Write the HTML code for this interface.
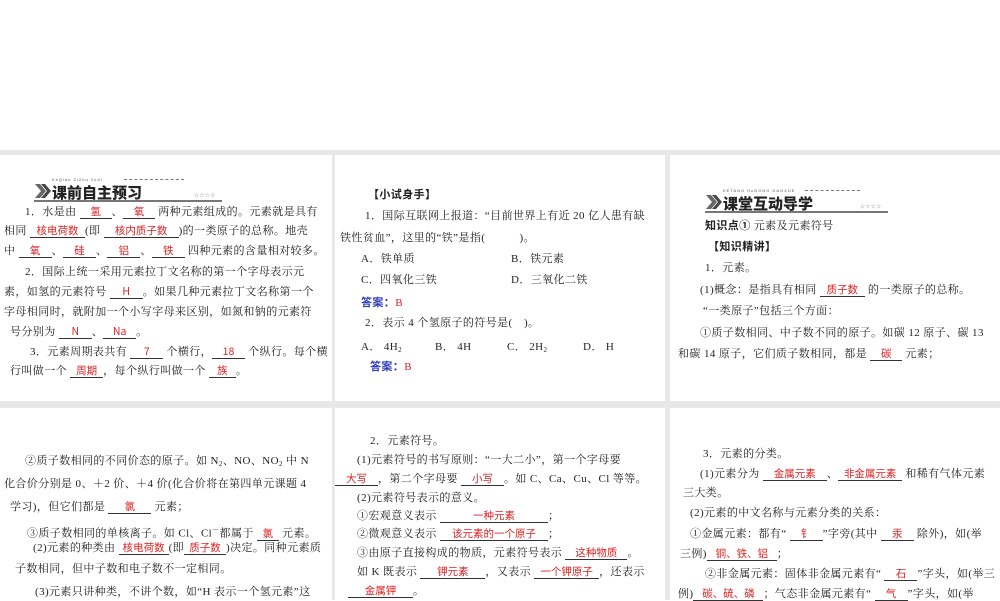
<!DOCTYPE html>
<html><head><meta charset="utf-8"><style>
*{margin:0;padding:0;box-sizing:border-box}
body{width:1000px;height:600px;background:#fff;position:relative;overflow:hidden;font-family:"Liberation Serif","Noto Serif CJK SC",serif;font-size:11px;color:#222;letter-spacing:0.4px}
.g{position:absolute;left:0;top:150px;width:1000px;height:450px;background:#e8e8e8}
.p{position:absolute;background:#fff}
.l{position:absolute;white-space:nowrap;line-height:14px;height:14px}
.b{display:inline-block;border-bottom:1px solid #333;color:#d22;text-align:center;line-height:12px;height:13px;vertical-align:baseline;font-family:"Noto Sans CJK SC","Liberation Sans",sans-serif;font-size:10.5px;letter-spacing:0}
.k{font-weight:bold;font-family:"Noto Sans CJK SC",sans-serif}
.bl{color:#2b3bbf;font-weight:bold;font-family:"Noto Sans CJK SC",sans-serif}
.r{color:#d22}
sub{font-size:7px;vertical-align:-2px}
sup{font-size:7px}
.hd{position:absolute;height:22px}
.hd .t{position:absolute;left:18px;top:2px;font-size:15px;font-weight:900;font-family:"Noto Sans CJK SC",sans-serif;color:#222;letter-spacing:0}
.hd .ln{position:absolute;left:0;bottom:0;height:2px;background:#777}
.hd .py{position:absolute;left:18px;top:-3px;font-size:4px;color:#555;letter-spacing:1px;font-family:"Liberation Sans",sans-serif}
.hd .st{position:absolute;bottom:3px;font-size:5px;color:#999}
.hd .dl{position:absolute;top:-1px;height:1px;border-top:1px dashed #777}
</style></head><body>
<div class="g"></div>
<div class="p" style="left:0;top:155px;width:332px;height:246px"></div>
<div class="p" style="left:335px;top:155px;width:330px;height:246px"></div>
<div class="p" style="left:670px;top:155px;width:330px;height:246px"></div>
<div class="p" style="left:0;top:408px;width:332px;height:192px"></div>
<div class="p" style="left:335px;top:408px;width:330px;height:192px"></div>
<div class="p" style="left:670px;top:408px;width:330px;height:192px"></div>

<div class="hd" style="left:34px;top:180px;width:188px">
<svg style="position:absolute;left:0;top:3px" width="18" height="16"><polygon points="1,1 6,1 12,8 6,15 1,15 7,8" fill="#666"/><polygon points="7,1 11,1 17,8 11,15 7,15 13,8" fill="#444"/></svg>
<div class="py">KeQian ZiZhu YuXi</div><div class="dl" style="left:90px;width:60px"></div>
<div class="t">课前自主预习</div><div class="st" style="left:160px">☆☆☆☆</div>
<div class="ln" style="width:188px"></div></div>

<div class="l" style="left:25px;top:205px">1．水是由 <span class="b" style="width:32px">氢</span>、<span class="b" style="width:32px">氧</span> 两种元素组成的。元素就是具有</div>
<div class="l" style="left:4px;top:224px">相同 <span class="b" style="width:55px">核电荷数</span>(即 <span class="b" style="width:75px">核内质子数</span>)的一类原子的总称。地壳</div>
<div class="l" style="left:4px;top:244px">中 <span class="b" style="width:33px">氧</span>、<span class="b" style="width:33px">硅</span>、<span class="b" style="width:33px">铝</span>、<span class="b" style="width:33px">铁</span> 四种元素的含量相对较多。</div>
<div class="l" style="left:25px;top:265px">2．国际上统一采用元素拉丁文名称的第一个字母表示元</div>
<div class="l" style="left:4px;top:285px">素，如氢的元素符号 <span class="b" style="width:33px">H</span>。如果几种元素拉丁文名称第一个</div>
<div class="l" style="left:4px;top:305px">字母相同时，就附加一个小写字母来区别，如氮和钠的元素符</div>
<div class="l" style="left:10px;top:325px">号分别为 <span class="b" style="width:33px">N</span>、<span class="b" style="width:33px">Na</span>。</div>
<div class="l" style="left:30px;top:345px">3．元素周期表共有 <span class="b" style="width:33px">7</span> 个横行，<span class="b" style="width:33px">18</span> 个纵行。每个横</div>
<div class="l" style="left:10px;top:364px">行叫做一个 <span class="b" style="width:33px">周期</span>，每个纵行叫做一个 <span class="b" style="width:27px">族</span>。</div>

<div class="l k" style="left:368px;top:187px">【小试身手】</div>
<div class="l" style="left:365px;top:209px">1．国际互联网上报道：“目前世界上有近 20 亿人患有缺</div>
<div class="l" style="left:340px;top:231px">铁性贫血”，这里的“铁”是指(　　　)。</div>
<div class="l" style="left:361px;top:252px">A．铁单质</div><div class="l" style="left:511px;top:252px">B．铁元素</div>
<div class="l" style="left:361px;top:273px">C．四氧化三铁</div><div class="l" style="left:511px;top:273px">D．三氧化二铁</div>
<div class="l" style="left:361px;top:295px"><span class="bl">答案：</span><span class="r">B</span></div>
<div class="l" style="left:365px;top:316px">2．表示 4 个氢原子的符号是(　)。</div>
<div class="l" style="left:361px;top:340px">A． 4H<sub>2</sub></div><div class="l" style="left:435px;top:340px">B． 4H</div><div class="l" style="left:507px;top:340px">C． 2H<sub>2</sub></div><div class="l" style="left:583px;top:340px">D． H</div>
<div class="l" style="left:370px;top:359px"><span class="bl">答案：</span><span class="r">B</span></div>

<div class="hd" style="left:705px;top:191px;width:183px">
<svg style="position:absolute;left:0;top:3px" width="18" height="16"><polygon points="1,1 6,1 12,8 6,15 1,15 7,8" fill="#666"/><polygon points="7,1 11,1 17,8 11,15 7,15 13,8" fill="#444"/></svg>
<div class="py">KETANG HuDONG DAOXUE</div><div class="dl" style="left:100px;width:55px"></div>
<div class="t">课堂互动导学</div><div class="st" style="left:155px">☆☆☆☆</div>
<div class="ln" style="width:183px"></div></div>
<div class="l" style="left:705px;top:218px"><span class="k">知识点①</span> 元素及元素符号</div>
<div class="l k" style="left:708px;top:239px">【知识精讲】</div>
<div class="l" style="left:705px;top:261px">1．元素。</div>
<div class="l" style="left:700px;top:283px">(1)概念：是指具有相同 <span class="b" style="width:45px">质子数</span> 的一类原子的总称。</div>
<div class="l" style="left:703px;top:304px">“一类原子”包括三个方面：</div>
<div class="l" style="left:700px;top:326px">①质子数相同、中子数不同的原子。如碳 12 原子、碳 13</div>
<div class="l" style="left:678px;top:347px">和碳 14 原子，它们质子数相同，都是 <span class="b" style="width:32px">碳</span> 元素；</div>

<div class="l" style="left:25px;top:454px">②质子数相同的不同价态的原子。如 N<sub>2</sub>、NO、NO<sub>2</sub> 中 N</div>
<div class="l" style="left:4px;top:477px">化合价分别是 0、＋2 价、＋4 价(化合价将在第四单元课题 4</div>
<div class="l" style="left:10px;top:500px">学习)，但它们都是 <span class="b" style="width:43px">氯</span> 元素；</div>
<div class="l" style="left:27px;top:523px">③质子数相同的单核离子。如 Cl、Cl<sup>－</sup>都属于 <span class="b" style="width:22px">氯</span> 元素。</div>
<div class="l" style="left:33px;top:541px">(2)元素的种类由 <span class="b" style="width:50px">核电荷数</span>(即<span class="b" style="width:42px">质子数</span>)决定。同种元素质</div>
<div class="l" style="left:15px;top:562px">子数相同，但中子数和电子数不一定相同。</div>
<div class="l" style="left:35px;top:585px">(3)元素只讲种类，不讲个数，如“H 表示一个氢元素”这</div>

<div class="l" style="left:370px;top:434px">2．元素符号。</div>
<div class="l" style="left:357px;top:453px">(1)元素符号的书写原则：“一大二小”，第一个字母要</div>
<div class="l" style="left:335px;top:472px"><span class="b" style="width:43px">大写</span>，第二个字母要 <span class="b" style="width:43px">小写</span>。如 C、Ca、Cu、Cl 等等。</div>
<div class="l" style="left:357px;top:491px">(2)元素符号表示的意义。</div>
<div class="l" style="left:357px;top:509px">①宏观意义表示 <span class="b" style="width:108px">一种元素</span>；</div>
<div class="l" style="left:357px;top:527px">②微观意义表示 <span class="b" style="width:108px">该元素的一个原子</span>；</div>
<div class="l" style="left:357px;top:546px">③由原子直接构成的物质，元素符号表示 <span class="b" style="width:62px">这种物质</span>。</div>
<div class="l" style="left:357px;top:565px">如 K 既表示 <span class="b" style="width:65px">钾元素</span>，又表示 <span class="b" style="width:65px">一个钾原子</span>，还表示</div>
<div class="l" style="left:348px;top:584px"><span class="b" style="width:65px">金属钾</span>。</div>

<div class="l" style="left:703px;top:447px">3．元素的分类。</div>
<div class="l" style="left:700px;top:467px">(1)元素分为 <span class="b" style="width:64px">金属元素</span>、<span class="b" style="width:64px">非金属元素</span> 和稀有气体元素</div>
<div class="l" style="left:683px;top:486px">三大类。</div>
<div class="l" style="left:690px;top:506px">(2)元素的中文名称与元素分类的关系：</div>
<div class="l" style="left:690px;top:527px">①金属元素：都有“ <span class="b" style="width:33px">钅</span>”字旁(其中 <span class="b" style="width:33px">汞</span> 除外)，如(举</div>
<div class="l" style="left:680px;top:547px">三例)<span class="b" style="width:70px">铜、铁、铝</span>；</div>
<div class="l" style="left:705px;top:567px">②非金属元素：固体非金属元素有“ <span class="b" style="width:33px">石</span>”字头，如(举三</div>
<div class="l" style="left:678px;top:587px">例)<span class="b" style="width:70px">碳、硫、磷</span>；气态非金属元素有“ <span class="b" style="width:33px">气</span>”字头，如(举</div>
</body></html>
